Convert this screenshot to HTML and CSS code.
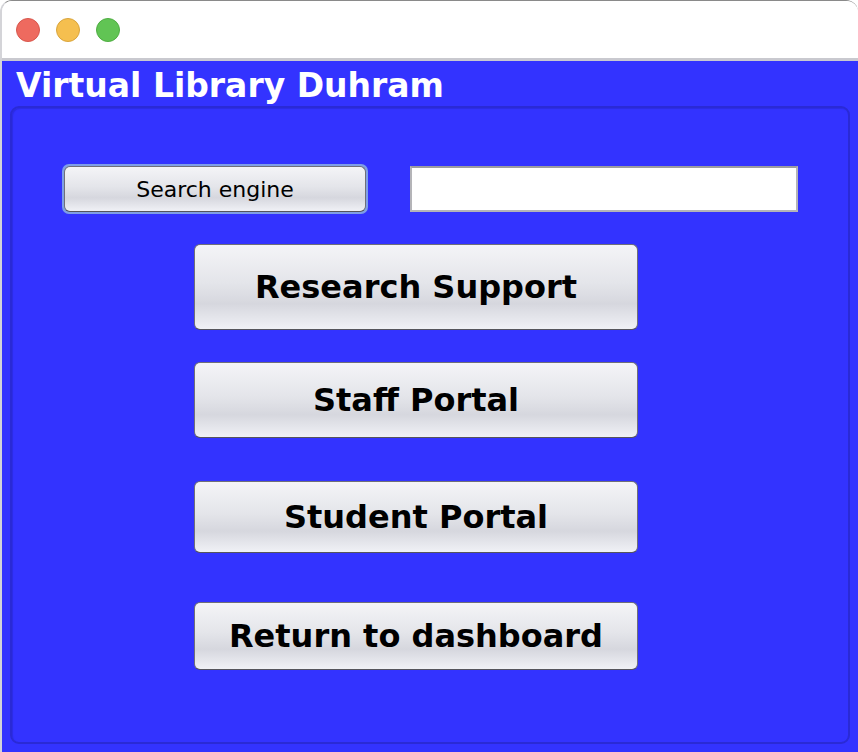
FILE: index.html
```html
<!DOCTYPE html>
<html>
<head>
<meta charset="utf-8">
<link rel="stylesheet" href="styles.css">
</head>
<body>
<div class="window">
  <div class="titlebar">
    <span class="light red"></span>
    <span class="light yellow"></span>
    <span class="light green"></span>
  </div>
  <div class="content">
    <h1 class="title">Virtual Library Duhram</h1>
    <div class="panel">
      <div class="search-row">
        <div class="focus-ring"><button class="btn small">Search engine</button></div>
        <input class="field" type="text">
      </div>
      <div class="actions">
        <button class="btn big b1">Research Support</button>
        <button class="btn big b2">Staff Portal</button>
        <button class="btn big b3">Student Portal</button>
        <button class="btn big b4">Return to dashboard</button>
      </div>
    </div>
  </div>
</div>
</body>
</html>
```

FILE: styles.css
```css
html, body {
  margin: 0;
  padding: 0;
  background: #ffffff;
}
.window {
  width: 858px;
  height: 752px;
  box-sizing: border-box;
  border-radius: 12px 12px 0 0;
  border-top: 1px solid #8a8a8a;
  border-left: 2px solid #d4d4d8;
  overflow: hidden;
  display: flex;
  flex-direction: column;
  font-family: "DejaVu Sans", "Liberation Sans", sans-serif;
  background: #ffffff;
}
.titlebar {
  height: 60px;
  flex: none;
  display: flex;
  align-items: center;
  gap: 16px;
  padding-left: 14px;
  box-sizing: border-box;
  background: #ffffff;
  border-bottom: 3px solid #c9c9cf;
}
.light {
  width: 24px;
  height: 24px;
  border-radius: 50%;
  box-sizing: border-box;
  margin-top: 1px;
}
.red { background: #ee6a5f; border: 1px solid #d8574d; }
.yellow { background: #f5bf4f; border: 1px solid #d9a53d; }
.green { background: #61c454; border: 1px solid #4fae42; }
.content {
  flex: 1;
  background: #3333ff;
  display: flex;
  flex-direction: column;
  padding: 0 8px 8px 8px;
}
.title {
  margin: 0;
  color: #ffffff;
  font-size: 33px;
  font-weight: bold;
  line-height: 41px;
  padding: 4px 0 0 6px;
}
.panel {
  flex: 1;
  border: 2px solid #2a2ad6;
  border-radius: 9px;
  box-shadow: inset 1px 1px 1px #2c2ce4;
  display: flex;
  flex-direction: column;
  padding: 56px 0 0 50px;
}
.search-row {
  display: flex;
  align-items: center;
  gap: 42px;
}
.focus-ring {
  padding: 2px;
  border-radius: 7px;
  background: #7f9fe6;
}
.btn {
  font-family: "DejaVu Sans", "Liberation Sans", sans-serif;
  color: #000000;
  border: 1px solid #6f6f78;
  border-bottom-color: #55555c;
  border-radius: 6px;
  background: linear-gradient(to bottom, #f4f4f7 0%, #e4e5ea 45%, #d6d7de 70%, #f0f1f6 100%);
  padding: 0;
  margin: 0;
  display: flex;
  align-items: center;
  justify-content: center;
  box-sizing: border-box;
}
.small {
  width: 302px;
  height: 46px;
  font-size: 22px;
}
.field {
  width: 388px;
  height: 46px;
  box-sizing: border-box;
  border: 2px solid #b4b4b8;
  border-top-color: #9c9ca0;
  background: #ffffff;
  margin: 0;
  padding: 0;
}
.actions {
  display: flex;
  flex-direction: column;
  padding-left: 132px;
}
.big {
  width: 444px;
  font-size: 32px;
  font-weight: bold;
}
.b1 { height: 86px; margin-top: 30px; }
.b2 { height: 76px; margin-top: 32px; }
.b3 { height: 72px; margin-top: 43px; }
.b4 { height: 68px; margin-top: 49px; }
```
